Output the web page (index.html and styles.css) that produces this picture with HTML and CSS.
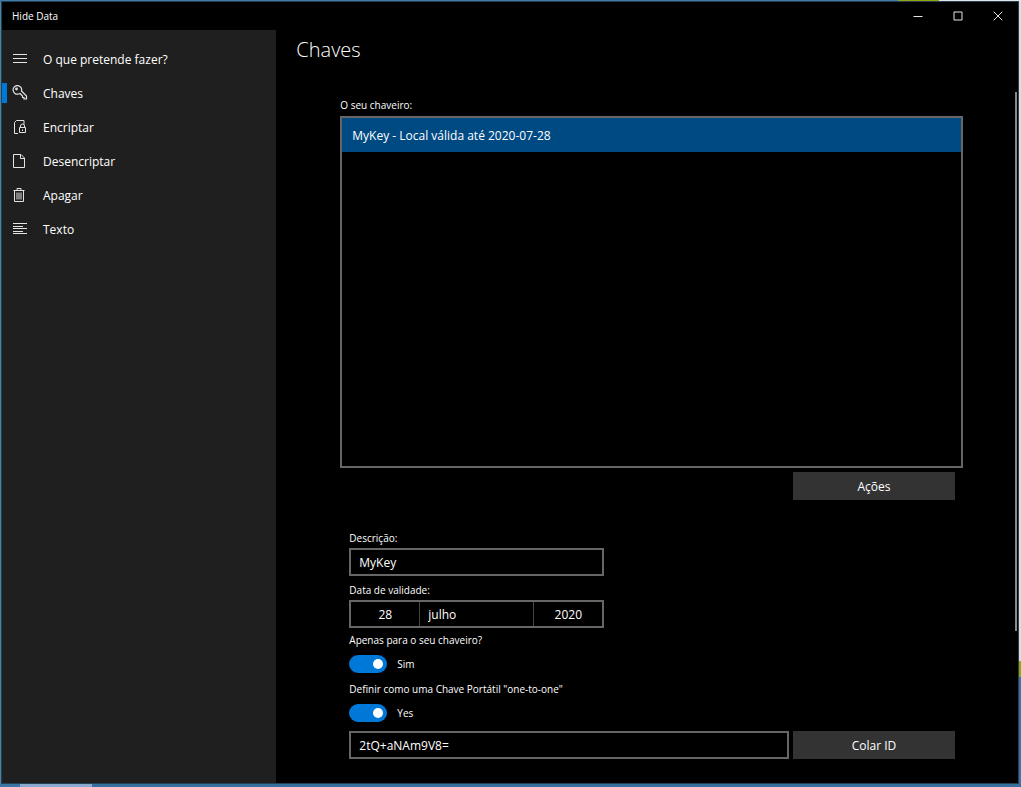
FILE: index.html
```html
<!DOCTYPE html>
<html lang="pt">
<head>
    <meta charset="UTF-8">
    <meta name="viewport" content="width=device-width, initial-scale=1.0">
    <title>Hide Data</title>
    <link rel="stylesheet" href="styles.css">
</head>
<body>
    <div class="window">
        <header class="titlebar">
            <span class="app-name">Hide Data</span>
            <div class="window-buttons">
                <button type="button" aria-label="Minimizar">
                    <svg width="10" height="10" viewBox="0 0 10 10"><path d="M0.5 5.5h9"/></svg>
                </button>
                <button type="button" aria-label="Maximizar">
                    <svg width="10" height="10" viewBox="0 0 10 10"><path d="M1 1h8v8H1z"/></svg>
                </button>
                <button type="button" aria-label="Fechar">
                    <svg width="10" height="10" viewBox="0 0 10 10"><path d="M0.7 0.7l8.6 8.6M9.3 0.7l-8.6 8.6"/></svg>
                </button>
            </div>
        </header>

        <div class="shell">
            <nav class="sidebar">
                <a href="#menu">
                    <svg width="16" height="16" viewBox="0 0 16 16"><path d="M1 3.5h14M1 7.5h14M1 11.5h14"/></svg>
                    O que pretende fazer?
                </a>
                <a href="#chaves" class="active">
                    <svg width="16" height="16" viewBox="0 0 16 16">
                        <path d="M6.5 9A4.3 4.3 0 1 1 9.5 6L14.5 11v3h-2.5v-1.5h-1.5V11L8 8.5z"/>
                        <circle cx="4.5" cy="4" r="0.8"/>
                    </svg>
                    Chaves
                </a>
                <a href="#encriptar">
                    <svg width="16" height="16" viewBox="0 0 16 16">
                        <path d="M6 14.5H2.5V3.500l2-2h7.500V5.500"/>
                        <path d="M7.5 8.500h6v5h-6zM8.500 8.500V7a2 2 0 0 1 4 0v1.500M10.500 10.500v1.500"/>
                    </svg>
                    Encriptar
                </a>
                <a href="#desencriptar">
                    <svg width="16" height="16" viewBox="0 0 16 16">
                        <path d="M1.5 1.5h7.5l3.5 3.5v9.500h-11zM8.500 1.500v4h4"/>
                    </svg>
                    Desencriptar
                </a>
                <a href="#apagar">
                    <svg width="16" height="16" viewBox="0 0 16 16">
                        <path d="M1.5 3.5h11M2.500 3.500v11h9v-11M5 3.500v-2h4v2M5 5.500v7M7 5.500v7M9 5.500v7"/>
                    </svg>
                    Apagar
                </a>
                <a href="#texto">
                    <svg width="16" height="16" viewBox="0 0 16 16">
                        <path d="M1 2.5h14M1 5.5h10M1 7.5h14M1 10.5h10M1 12.5h14"/>
                    </svg>
                    Texto
                </a>
            </nav>

            <main class="page">
                <h1>Chaves</h1>
                <div class="scroller">
                    <div class="content">
                        <span class="caption" id="keyringLabel">O seu chaveiro:</span>
                        <ul class="keyring" role="listbox" aria-labelledby="keyringLabel">
                            <li role="option" aria-selected="true">MyKey - Local válida até 2020-07-28</li>
                        </ul>
                        <div class="actions">
                            <button type="button" class="btn">Ações</button>
                        </div>

                        <form class="key-form">
                            <label class="caption" for="description">Descrição:</label>
                            <input type="text" class="field short" id="description" value="MyKey">

                            <label class="caption" for="day">Data de validade:</label>
                            <div class="field short date">
                                <select id="day" aria-label="Dia"><option>28</option></select>
                                <select class="month" aria-label="Mês"><option>julho</option></select>
                                <select aria-label="Ano"><option>2020</option></select>
                            </div>

                            <label class="caption" for="ownKeyring">Apenas para o seu chaveiro?</label>
                            <div class="toggle">
                                <input type="checkbox" id="ownKeyring" checked>
                                <span>Sim</span>
                            </div>

                            <label class="caption" for="portable">Definir como uma Chave Portátil "one-to-one"</label>
                            <div class="toggle">
                                <input type="checkbox" id="portable" checked>
                                <span>Yes</span>
                            </div>

                            <div class="id-row">
                                <input type="text" class="field" aria-label="ID" value="2tQ+aNAm9V8=">
                                <button type="button" class="btn">Colar ID</button>
                            </div>
                        </form>
                    </div>
                    <div class="scrollbar"></div>
                </div>
            </main>
        </div>
    </div>
</body>
</html>
```

FILE: styles.css
```css
* {
    box-sizing: border-box;
}
body {
    margin: 0;
    height: 100vh;
    padding: 1px 2px 3px 1px;
    font-family: "Open Sans", "Noto Sans", sans-serif;
    font-size: 12px;
    color: #fff;
    /* desktop showing around the window */
    background:
        linear-gradient(to right, #3f7cae 88%, #93a60c 88% 92%, #e6e6e6 92%) top / 100% 2px no-repeat,
        linear-gradient(to right, #3b76a5 2%, #8aa9ce 2% 9%, #35709f 9%) bottom / 100% 3px no-repeat,
        linear-gradient(#dedede 84%, #93a60c 84% 86%, #3b76a5 86%) right / 3px 100% no-repeat,
        #4683aa;
}
button, input, select {
    font: inherit;
    color: inherit;
    border-radius: 0;
}
svg {
    fill: none;
    stroke: #e4e4e4;
    stroke-width: 1;
    flex: none;
}
.window {
    height: 100%;
    min-height: 600px;
    display: flex;
    flex-direction: column;
    background-color: #000;
    border: 1px solid #263f52;
}

/* title bar */
.titlebar {
    height: 28px;
    display: flex;
    align-items: center;
    justify-content: space-between;
    padding-left: 10px;
    font-size: 10px;
}
.window-buttons {
    display: flex;
}
.window-buttons button {
    width: 40px;
    height: 28px;
    padding: 0;
    border: none;
    background: none;
    display: flex;
    align-items: center;
    justify-content: center;
}
.shell {
    flex: 1;
    min-height: 0;
    display: flex;
}

/* navigation */
.sidebar {
    flex: 0 0 27%;
    background-color: #1f1f1f;
    padding-top: 12px;
}
.sidebar a {
    height: 34px;
    display: flex;
    align-items: center;
    gap: 15px;
    padding-left: 10px;
    color: #fff;
    text-decoration: none;
}
.sidebar a.active {
    background: linear-gradient(#0078d7, #0078d7) left center / 5px 20px no-repeat;
}
.sidebar .active svg {
    stroke-width: 1.2;
}

/* page */
.page {
    flex: 1;
    min-width: 0;
    display: flex;
    flex-direction: column;
}
h1 {
    margin: 0;
    padding: 7px 20px 0;
    font-size: 20px;
    line-height: 26px;
    font-weight: 300;
}
.scroller {
    flex: 1;
    min-height: 0;
    display: flex;
    margin-top: 29px;
}
.content {
    flex: 1;
    min-width: 0;
    display: flex;
    flex-direction: column;
    padding: 4px 52px 24px 64px;
}
.scrollbar {
    width: 2px;
    height: 78%;
    margin-right: 1px;
    background-color: #8a8a8a;
}
.caption {
    display: block;
    font-size: 10px;
    line-height: 18px;
}
.keyring {
    flex: 1;
    margin: 2px 0 4px;
    padding: 0;
    list-style: none;
    border: 2px solid #666;
}
.keyring li {
    padding: 2px 10px 0;
    line-height: 32px;
    background-color: #004a83;
}
.btn {
    width: 162px;
    height: 28px;
    flex: none;
    padding: 0;
    border: none;
    background-color: #333;
}
.actions {
    display: flex;
    justify-content: flex-end;
    padding-right: 8px;
}
.key-form {
    padding: 29px 8px 0 9px;
}
.field {
    width: 100%;
    height: 28px;
    display: block;
    padding: 0 8px;
    border: 2px solid #666;
    background-color: #000;
}
.short {
    width: 255px;
    margin: 1px 0 5px;
}
.date {
    display: flex;
    padding: 0;
    margin-bottom: 3px;
}
.date select {
    width: 68px;
    padding: 0;
    border: none;
    background: none;
    appearance: none;
    text-align: center;
    text-align-last: center;
}
.date .month {
    flex: 1;
    padding-left: 8px;
    border: solid #444;
    border-width: 0 1px;
    text-align-last: left;
}
.toggle {
    display: flex;
    align-items: center;
    gap: 10px;
    height: 18px;
    margin: 6px 0 7px;
    font-size: 10px;
}
.toggle input {
    appearance: none;
    width: 38px;
    height: 18px;
    margin: 0;
    padding: 4px;
    border-radius: 9px;
    background-color: #666;
    display: flex;
}
.toggle input:checked {
    justify-content: flex-end;
    background-color: #0078d7;
}
.toggle input::before {
    content: "";
    width: 10px;
    height: 10px;
    border-radius: 50%;
    background-color: #fff;
}
.id-row {
    display: flex;
    gap: 4px;
    margin-top: 9px;
}
```
